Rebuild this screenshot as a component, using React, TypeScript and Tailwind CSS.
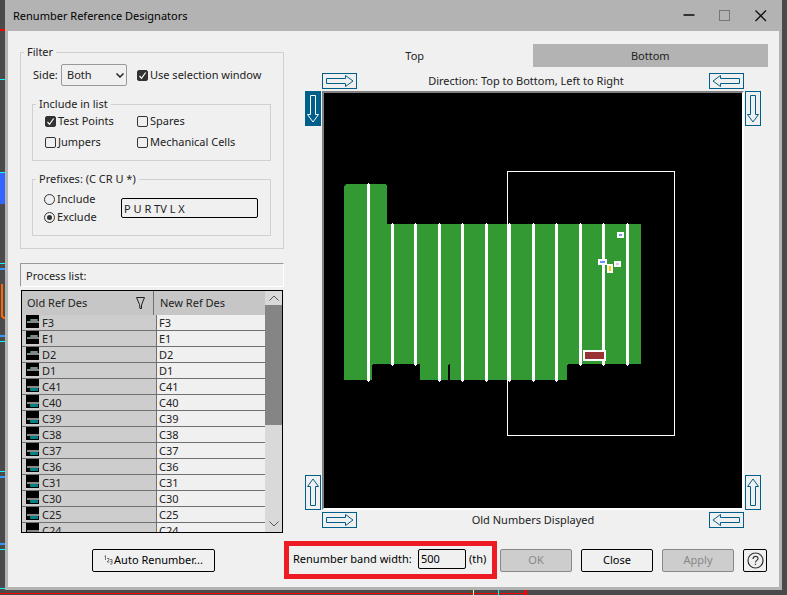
import React from "react";

type Dir = "right" | "left" | "up" | "down";

const ROWS = ["F3", "E1", "D2", "D1", "C41", "C40", "C39", "C38", "C37", "C36", "C31", "C30", "C25", "C24"];

const ROTATION: Record<Dir, string> = {
  right: "",
  left: "rotate(180 17.5 8)",
  down: "translate(16 0) rotate(90)",
  up: "translate(0 35) rotate(-90)",
};

function ArrowButton({ dir, label, active = false }: { dir: Dir; label: string; active?: boolean }) {
  const horizontal = dir === "right" || dir === "left";
  return (
    <button
      type="button"
      aria-label={label}
      aria-pressed={active}
      className={`block shrink-0 ${horizontal ? "h-4 w-[35px]" : "h-[35px] w-4"} ${active ? "bg-[#005f8a] text-white" : "text-[#005f8a]"}`}
    >
      <svg className="block h-full w-full" viewBox={horizontal ? "0 0 35 16" : "0 0 16 35"} fill="none" stroke="currentColor">
        {!active && <rect x="0.5" y="0.5" width={horizontal ? 34 : 15} height={horizontal ? 15 : 34} />}
        <path transform={ROTATION[dir]} d="M4.500 5.500H23.500V2.500L31 8L23.500 13.500V10.500H4.500Z" />
      </svg>
    </button>
  );
}

function Check({ label, checked = false }: { label: string; checked?: boolean }) {
  return (
    <label className="flex items-center gap-0.5 whitespace-nowrap">
      <span className="grid shrink-0">
        <input
          type="checkbox"
          defaultChecked={checked}
          className="peer col-start-1 row-start-1 size-[11px] appearance-none rounded-[2px] border border-[#333] checked:bg-[#333]"
        />
        <svg viewBox="0 0 11 11" className="pointer-events-none invisible col-start-1 row-start-1 size-[11px] peer-checked:visible" fill="none" stroke="white" strokeWidth="1.2">
          <path d="M2.500 6L4.500 8.300L8.700 2.500" />
        </svg>
      </span>
      {label}
    </label>
  );
}

function Radio({ label, checked = false }: { label: string; checked?: boolean }) {
  return (
    <label className="flex items-center gap-0.5">
      <span className="grid shrink-0 place-items-center">
        <input
          type="radio"
          name="prefix-mode"
          defaultChecked={checked}
          className="peer col-start-1 row-start-1 size-[11px] appearance-none rounded-full border border-[#333]"
        />
        <span className="pointer-events-none invisible col-start-1 row-start-1 size-[5px] rounded-full bg-[#333] peer-checked:visible" />
      </span>
      {label}
    </label>
  );
}

function PartIcon({ top }: { top: boolean }) {
  return (
    <svg viewBox="0 0 13 13" className="block size-[13px] shrink-0" shapeRendering="crispEdges" aria-hidden="true">
      <rect width="13" height="13" fill="#000" />
      {top ? (
        <>
          <rect x="4" y="4" width="8" height="3" fill="#008080" />
          <rect x="5" y="4" width="6" height="3" fill="#888" />
          <rect x="1" y="6" width="12" height="2" fill="#888" />
        </>
      ) : (
        <>
          <rect x="1" y="7" width="12" height="2" fill="#888" />
          <rect x="4" y="9" width="8" height="3" fill="#008080" />
        </>
      )}
    </svg>
  );
}

function ProcessTable() {
  return (
    <div className="mr-px ml-px flex min-h-0 flex-1 overflow-hidden border border-black">
      <div className="min-w-0 flex-1 overflow-hidden">
        <table className="w-full table-fixed border-separate border-spacing-0 text-left">
          <thead>
            <tr className="h-6 bg-[#c6c6c6]">
              <th className="w-[135px] p-0 font-normal">
                <div className="mr-[3px] flex h-6 items-center justify-between border-r border-[#707070] pr-2 pl-[5px]">
                  Old Ref Des
                  <svg viewBox="0 0 9 12" className="h-3 w-[9px]" fill="none" stroke="#222">
                    <path d="M0.500 0.500H8.500L5.500 8V11.500H4L3.500 7.500Z" />
                  </svg>
                </div>
              </th>
              <th className="p-0 pl-[3px] font-normal">New Ref Des</th>
            </tr>
          </thead>
          <tbody>
            {ROWS.map((r) => (
              <tr key={r} className="h-4 leading-[15px]">
                <td className="border-r border-b border-[#707070] bg-[#cdcdcd] p-0">
                  <div className="flex h-[15px] items-start gap-[3px] pl-1">
                    <PartIcon top={!r.startsWith("C")} />
                    <span>{r}</span>
                  </div>
                </td>
                <td className="border-b border-[#707070] p-0 pl-0.5">{r}</td>
              </tr>
            ))}
          </tbody>
        </table>
      </div>
      <div className="flex w-[17px] shrink-0 flex-col bg-[#d9d9d9] text-[#555]">
        <button type="button" aria-label="Scroll up" className="grid h-3.5 place-items-center">
          <svg viewBox="0 0 10 6" className="h-1.5 w-2.5" fill="none" stroke="currentColor"><path d="M0.500 5.500L5 1L9.500 5.500" /></svg>
        </button>
        <div className="h-[120px] bg-[#858585]" />
        <button type="button" aria-label="Scroll down" className="mt-auto grid h-4 place-items-center">
          <svg viewBox="0 0 10 6" className="h-1.5 w-2.5" fill="none" stroke="currentColor"><path d="M0.500 0.500L5 5L9.500 0.500" /></svg>
        </button>
      </div>
    </div>
  );
}

/* Band lines: x position, top and bottom of each stroke. */
const BANDS: [number, number, number][] = [
  [43, 91, 288], [67, 131, 272], [90, 131, 272], [114, 131, 288], [137, 131, 288], [161, 131, 288],
  [184, 131, 288], [208, 131, 288], [231, 131, 288], [255, 131, 272], [278, 131, 272], [302, 131, 272],
];

function BoardView() {
  return (
    <div className="min-h-0 flex-1 overflow-hidden border-2 border-t-[#808080] border-r-white border-b-white border-l-[#808080] bg-black">
      <svg viewBox="0 0 418 415" className="block h-full w-full" preserveAspectRatio="xMidYMid meet" shapeRendering="crispEdges" role="img" aria-label="Board preview">
        <path fill="#339933" d="M22 91H61L63 93V131H316L317 132V271H244L243 272V287H126V272L125 271L124 272V287H96V272L95 271H49L48 272V287H20V93Z" />
        <rect x="124" y="272" width="2" height="15" fill="#000" />
        {BANDS.map(([x, a, b]) => (
          <g key={x} fill="#fff">
            <rect x={x} y={a} width="3" height={b - a} />
            <rect x={x + 1} y={a - 1} width="1" height={b - a + 2} />
          </g>
        ))}
        <rect x="183.500" y="78.500" width="167" height="264" fill="none" stroke="#fff" />
        <rect x="293" y="139" width="7" height="6" fill="#fff" /><rect x="295" y="141" width="3" height="2" fill="#6699ff" />
        <rect x="274" y="166" width="9" height="6" fill="#fff" /><rect x="276" y="168" width="5" height="2" fill="#6699ff" />
        <rect x="290" y="168" width="7" height="6" fill="#fff" /><rect x="292" y="170" width="3" height="2" fill="#ccc" />
        <rect x="283" y="171" width="6" height="9" fill="#fff" /><rect x="285" y="173" width="2" height="5" fill="#ffcc00" />
        <rect x="259" y="257" width="23" height="11" fill="#fff" /><rect x="261" y="259" width="19" height="7" fill="#993333" />
      </svg>
    </div>
  );
}

function Backdrop() {
  return (
    <svg className="absolute inset-0 h-full w-full" aria-hidden="true" shapeRendering="crispEdges">
      <rect y="29" width="5" height="2" fill="#f00" />
      <rect y="79" width="5" height="1" fill="#0ff" />
      <rect y="172" width="5" height="1" fill="#0ff" />
      <rect y="173" width="5" height="31" fill="#3366ff" />
      <rect y="263" width="5" height="1" fill="#0ff" />
      <rect y="268" width="5" height="2" fill="#3399ff" />
      <path d="M2 284V316L5 319" fill="none" stroke="#ff6600" strokeWidth="2" />
      <rect y="335" width="5" height="2" fill="#3399ff" />
      <rect y="341" width="5" height="1" fill="#0ff" />
      <rect y="471" width="5" height="1" fill="#0ff" />
      <rect y="476" width="5" height="2" fill="#3399ff" />
      <rect y="543" width="5" height="2" fill="#3399ff" />
      <rect y="549" width="5" height="1" fill="#0ff" />
      <rect y="588" width="5" height="1" fill="#0ff" />
      <rect y="593" width="525" height="1" fill="#f00" />
      <rect x="473" y="590" width="1" height="5" fill="#ffffaa" />
      <rect x="498" y="590" width="1" height="5" fill="#0ff" />
      <rect x="524" y="590" width="3" height="5" fill="#f00" />
    </svg>
  );
}

const BTN = "h-[23px] w-[72px] rounded-[2px] border";

export default function App() {
  return (
    <div className="relative h-screen overflow-hidden bg-[#4a4a4a] px-[5px] pb-[5px] font-['Noto_Sans','Open_Sans',sans-serif] text-[11px] leading-4 text-[#222]">
      <Backdrop />
      <main className="relative flex h-full flex-col border-x-[3px] border-b-[3px] border-[#b3b3b3] bg-[#f0f0f0]">
        <header className="flex h-[31px] shrink-0 items-center justify-between bg-[#b3b3b3] pr-3 pl-[5px]">
          <h1 className="text-black">Renumber Reference Designators</h1>
          <div className="flex gap-6">
            <button type="button" aria-label="Minimize">
              <svg viewBox="0 0 12 12" className="size-3"><path d="M0.500 5H11.500" stroke="#333" strokeWidth="2" /></svg>
            </button>
            <button type="button" aria-label="Maximize">
              <svg viewBox="0 0 12 12" className="size-3"><rect x="0.500" y="0.500" width="10" height="10" fill="none" stroke="#777" /></svg>
            </button>
            <button type="button" aria-label="Close window">
              <svg viewBox="0 0 12 12" className="size-3"><path d="M0.500 0.500L11 11M11 0.500L0.500 11" stroke="#111" strokeWidth="1.3" /></svg>
            </button>
          </div>
        </header>

        <div className="flex min-h-0 flex-1 gap-[13px] pt-[13px] pr-[11px] pl-3">
          <section className="flex w-[264px] shrink-0 flex-col">
            <fieldset className="border border-[#d0d0d0] px-[3px] pb-3">
              <legend className="px-[3px]">Filter</legend>
              <div className="mr-[9px] ml-2 flex flex-col">
                <div className="flex items-center pt-1">
                  <label htmlFor="side" className="w-[29px] pl-px">Side:</label>
                  <span className="grid w-[66px] items-center">
                    <select id="side" className="col-start-1 row-start-1 h-[22px] appearance-none rounded-[2px] border border-[#999] pl-[5px]">
                      <option>Both</option>
                      <option>Top</option>
                      <option>Bottom</option>
                    </select>
                    <svg viewBox="0 0 8 5" className="pointer-events-none col-start-1 row-start-1 mr-[3px] h-[5px] w-2 justify-self-end" fill="none" stroke="#222" strokeWidth="1.500"><path d="M0.500 0.500L4 4L7.500 0.500" /></svg>
                  </span>
                  <span className="ml-2.5"><Check label="Use selection window" checked /></span>
                </div>
                <fieldset className="mt-2.5 border border-[#d0d0d0] px-[3px] pb-2.5">
                  <legend className="px-[3px]">Include in list</legend>
                  <div className="ml-[9px] grid grid-cols-[92px_1fr] gap-y-[5px] pt-px">
                    <Check label="Test Points" checked />
                    <Check label="Spares" />
                    <Check label="Jumpers" />
                    <Check label="Mechanical Cells" />
                  </div>
                </fieldset>
                <fieldset className="mt-2.5 border border-[#d0d0d0] px-[3px] pb-2.5">
                  <legend className="px-[3px]">Prefixes: (C CR U *)</legend>
                  <div className="mr-[9px] ml-2 flex items-center justify-between pt-1">
                    <div className="flex flex-col gap-0.5">
                      <Radio label="Include" />
                      <Radio label="Exclude" checked />
                    </div>
                    <input aria-label="Prefixes" defaultValue="P U R TV L X" className="h-5 w-[137px] rounded-[2px] border border-black px-0.5" />
                  </div>
                </fieldset>
              </div>
            </fieldset>
            <h2 className="mt-3.5 mb-[3px] h-6 shrink-0 border border-t-[#999] border-r-white border-b-white border-l-[#999] pl-[5px] leading-[23px]">Process list:</h2>
            <ProcessTable />
          </section>

          <section className="flex min-w-0 flex-1 flex-col">
            <div role="tablist" className="grid h-[23px] shrink-0 grid-cols-2">
              <button type="button" role="tab" aria-selected="true">Top</button>
              <button type="button" role="tab" aria-selected="false" className="bg-[#b3b3b3]">Bottom</button>
            </div>
            <div className="mr-[7px] ml-2 flex min-h-0 flex-1 flex-col pt-1.5">
              <div className="mx-[17px] flex items-center justify-between">
                <ArrowButton dir="right" label="Top row, left to right" />
                <span className="pr-3.5 leading-[14px]">Direction: Top to Bottom, Left to Right</span>
                <ArrowButton dir="left" label="Top row, right to left" />
              </div>
              <div className="my-0.5 flex min-h-0 flex-1 gap-px">
                <div className="flex flex-col justify-between">
                  <ArrowButton dir="down" label="Left column, downwards" active />
                  <ArrowButton dir="up" label="Left column, upwards" />
                </div>
                <BoardView />
                <div className="flex flex-col justify-between">
                  <ArrowButton dir="down" label="Right column, downwards" />
                  <ArrowButton dir="up" label="Right column, upwards" />
                </div>
              </div>
              <div className="mx-[17px] mb-[5px] flex items-center justify-between">
                <ArrowButton dir="right" label="Bottom row, left to right" />
                <span>Old Numbers Displayed</span>
                <ArrowButton dir="left" label="Bottom row, right to left" />
              </div>
            </div>
          </section>
        </div>

        <footer className="flex shrink-0 items-center pt-2 pr-3 pb-2 text-black">
          <div className="flex w-[276px] justify-center pl-[15px]">
            <button type="button" className="flex h-[23px] w-[123px] items-center justify-center gap-px rounded-[2px] border border-black">
              <svg viewBox="0 0 9 10" className="h-2.5 w-[9px]" fill="none" stroke="#555" strokeWidth="0.8" aria-hidden="true">
                <path d="M0.500 1.500L1.500 0.500V5M3 3.500H5V5L3 7H5.500M6 4.500H8V9H6M6.500 6.500H8" />
              </svg>
              Auto Renumber...
            </button>
          </div>
          <div className="flex h-[38px] w-[213px] items-center border-[5px] border-[#ed1c24] pb-[3px] pl-1">
            <label htmlFor="band" className="w-[125px]">Renumber band width:</label>
            <input id="band" defaultValue="500" className="h-5 w-12 rounded-[2px] border border-black px-0.5" />
            <span className="ml-[3px]">(th)</span>
          </div>
          <div className="ml-auto flex gap-[9px]">
            <button type="button" disabled className={`${BTN} border-[#888] bg-[#cdcdcd] text-[#888]`}>OK</button>
            <button type="button" className={`${BTN} border-black`}>Close</button>
            <button type="button" disabled className={`${BTN} border-[#888] bg-[#cdcdcd] text-[#888]`}>Apply</button>
            <button type="button" aria-label="Help" className="grid h-[23px] w-6 place-items-center rounded-[2px] border border-black">
              <svg viewBox="0 0 17 17" className="size-[17px]" fill="none" stroke="#333" strokeWidth="1.200">
                <circle cx="8.500" cy="8.500" r="7.500" />
                <path d="M6 7C6 3.500 11 3.500 11 6.500C11 8.500 8.500 8.300 8.500 10.500M8.500 11.800V13" />
              </svg>
            </button>
          </div>
        </footer>
      </main>
    </div>
  );
}
